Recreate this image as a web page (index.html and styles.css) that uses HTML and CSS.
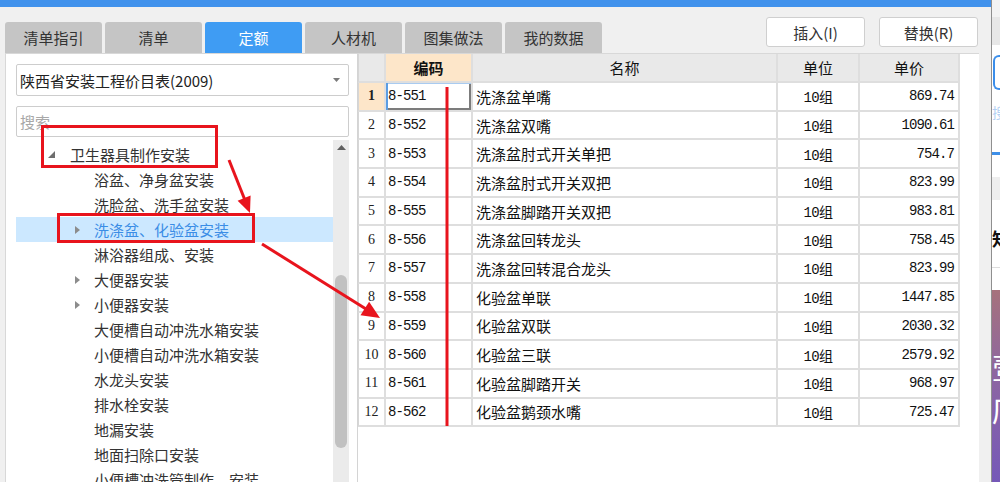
FILE: index.html
```html
<!DOCTYPE html>
<html lang="zh-CN">
<head>
<meta charset="utf-8">
<title>定额</title>
<link rel="stylesheet" href="styles.css">
</head>
<body>
<div class="screen">
  <div class="app">
    <div class="titlebar"></div>
    <div class="toolbar">
      <div class="tabs">
        <div class="tab">清单指引</div>
        <div class="tab">清单</div>
        <div class="tab active">定额</div>
        <div class="tab">人材机</div>
        <div class="tab">图集做法</div>
        <div class="tab">我的数据</div>
      </div>
      <div class="actions">
        <button class="btn">插入(I)</button>
        <button class="btn">替换(R)</button>
      </div>
    </div>
    <div class="workspace">
      <div class="left-panel">
        <div class="select">
          <span class="select-text">陕西省安装工程价目表(2009)</span>
          <svg class="caret" width="7" height="4" viewBox="0 0 7 4"><polygon points="0,0 7,0 3.5,4" fill="#7a7a7a"/></svg>
        </div>
        <div class="search">搜索</div>
        <div class="tree-wrap">
          <ul class="tree">
            <li class="node root"><svg class="tg-open" width="7" height="7" viewBox="0 0 7 7"><polygon points="7,0 7,7 0,7" fill="#6e6e6e"/></svg>卫生器具制作安装</li>
            <li class="node leaf">浴盆、净身盆安装</li>
            <li class="node leaf">洗脸盆、洗手盆安装</li>
            <li class="node branch selected"><svg class="tg" width="5" height="8" viewBox="0 0 5 8"><polygon points="0,0 5,4 0,8" fill="#8c8c8c"/></svg>洗涤盆、化验盆安装</li>
            <li class="node leaf">淋浴器组成、安装</li>
            <li class="node branch"><svg class="tg" width="5" height="8" viewBox="0 0 5 8"><polygon points="0,0 5,4 0,8" fill="#8c8c8c"/></svg>大便器安装</li>
            <li class="node branch"><svg class="tg" width="5" height="8" viewBox="0 0 5 8"><polygon points="0,0 5,4 0,8" fill="#8c8c8c"/></svg>小便器安装</li>
            <li class="node leaf">大便槽自动冲洗水箱安装</li>
            <li class="node leaf">小便槽自动冲洗水箱安装</li>
            <li class="node leaf">水龙头安装</li>
            <li class="node leaf">排水栓安装</li>
            <li class="node leaf">地漏安装</li>
            <li class="node leaf">地面扫除口安装</li>
            <li class="node leaf">小便槽冲洗管制作、安装</li>
          </ul>
          <div class="vscroll">
            <svg class="sc-up" width="9" height="5" viewBox="0 0 9 5"><polygon points="0,5 9,5 4.5,0" fill="#606060"/></svg>
            <div class="thumb"></div>
          </div>
        </div>
      </div>
      <div class="right-panel">
        <table class="grid">
          <thead>
            <tr>
              <th class="c-idx"></th>
              <th class="c-code hl">编码</th>
              <th class="c-name">名称</th>
              <th class="c-unit">单位</th>
              <th class="c-price">单价</th>
            </tr>
          </thead>
          <tbody>
            <tr class="cur"><td class="idx">1</td><td class="code focus">8-551</td><td class="name">洗涤盆单嘴</td><td class="unit">10组</td><td class="price">869.74</td></tr>
            <tr><td class="idx">2</td><td class="code">8-552</td><td class="name">洗涤盆双嘴</td><td class="unit">10组</td><td class="price">1090.61</td></tr>
            <tr><td class="idx">3</td><td class="code">8-553</td><td class="name">洗涤盆肘式开关单把</td><td class="unit">10组</td><td class="price">754.7</td></tr>
            <tr><td class="idx">4</td><td class="code">8-554</td><td class="name">洗涤盆肘式开关双把</td><td class="unit">10组</td><td class="price">823.99</td></tr>
            <tr><td class="idx">5</td><td class="code">8-555</td><td class="name">洗涤盆脚踏开关双把</td><td class="unit">10组</td><td class="price">983.81</td></tr>
            <tr><td class="idx">6</td><td class="code">8-556</td><td class="name">洗涤盆回转龙头</td><td class="unit">10组</td><td class="price">758.45</td></tr>
            <tr><td class="idx">7</td><td class="code">8-557</td><td class="name">洗涤盆回转混合龙头</td><td class="unit">10组</td><td class="price">823.99</td></tr>
            <tr><td class="idx">8</td><td class="code">8-558</td><td class="name">化验盆单联</td><td class="unit">10组</td><td class="price">1447.85</td></tr>
            <tr><td class="idx">9</td><td class="code">8-559</td><td class="name">化验盆双联</td><td class="unit">10组</td><td class="price">2030.32</td></tr>
            <tr><td class="idx">10</td><td class="code">8-560</td><td class="name">化验盆三联</td><td class="unit">10组</td><td class="price">2579.92</td></tr>
            <tr><td class="idx">11</td><td class="code">8-561</td><td class="name">化验盆脚踏开关</td><td class="unit">10组</td><td class="price">968.97</td></tr>
            <tr><td class="idx">12</td><td class="code">8-562</td><td class="name">化验盆鹅颈水嘴</td><td class="unit">10组</td><td class="price">725.47</td></tr>
          </tbody>
        </table>
      </div>
    </div>
  </div>
  <div class="divider"></div>
  <div class="side">
    <div class="s-top"></div>
    <div class="s-bar"></div>
    <div class="s-gap"></div>
    <div class="s-input"></div>
    <div class="s-blank"><span class="s-blue">搜</span></div>
    <div class="s-line"></div>
    <div class="s-white1"></div>
    <div class="s-gray"></div>
    <div class="s-white2"></div>
    <div class="s-title">知</div>
    <div class="s-white3"></div>
    <div class="s-rule"></div>
    <div class="s-white4"></div>
    <div class="s-banner"><span class="s-glyph">壹</span><span class="s-glyph">店</span></div>
  </div>
  <svg class="annot" width="1000" height="482" viewBox="0 0 1000 482">
    <g fill="none" stroke="#e8141d" stroke-width="3">
      <rect x="42.5" y="126.5" width="174" height="40"/>
      <rect x="58.5" y="214.5" width="195" height="27"/>
      <line x1="229" y1="160" x2="244.5" y2="199"/>
      <line x1="262" y1="244" x2="366" y2="309"/>
    </g>
    <polygon points="250,213 237.6,200.7 250.6,195.5" fill="#e8141d"/>
    <polygon points="380,318 360.5,315.2 369.1,301.7" fill="#e8141d"/>
    <rect x="445.5" y="87" width="3" height="339" fill="#e8141d"/>
  </svg>
</div>
</body>
</html>
```

FILE: styles.css
```css
* { box-sizing: border-box; }
html, body { margin: 0; padding: 0; }
body {
  width: 1000px;
  height: 482px;
  overflow: hidden;
  background: #f0f0f0;
  font-family: "Noto Sans CJK SC", "Noto Sans", sans-serif;
  color: #333;
}
.screen { position: relative; display: flex; width: 1000px; height: 482px; }
.app { width: 991px; display: flex; flex-direction: column; background: #f0f0f0; }
.titlebar { height: 7px; flex: none; background: #4192ec; }

.toolbar { height: 46px; flex: none; display: flex; align-items: flex-end; padding-left: 5px; }
.tabs { display: flex; gap: 3px; }
.tab {
  width: 97px; height: 31px; line-height: 31px;
  text-align: center; font-size: 15px; color: #333;
  background: #c5c5c5; border-radius: 3px 3px 0 0;
}
.tab.active { background: #3f9cf3; color: #fff; }
.actions { margin-left: auto; align-self: flex-start; margin-top: 10px; margin-right: 13px; display: flex; gap: 14px; }
.btn {
  width: 99px; height: 30px; padding: 0;
  background: #fff; border: 1px solid #cfcfcf; border-radius: 3px;
  font-family: "Noto Sans CJK SC", "Noto Sans", sans-serif; font-size: 15px; color: #333;
}

.workspace { flex: 1; min-height: 0; display: flex; padding-left: 5px; }
.left-panel {
  width: 352px; background: #fff;
  border-left: 1px solid #d8d8d8; border-top: 1px solid #d8d8d8;
  padding: 10px 0 0 10px;
  display: flex; flex-direction: column;
}
.select {
  width: 333px; height: 32px; flex: none;
  border: 1px solid #cdcdcd; border-radius: 2px;
  display: flex; align-items: center; padding: 0 0 0 3px;
  font-size: 15px; color: #222;
}
.select-text { flex: 1; }
.caret { margin-right: 8px; }
.search {
  width: 333px; height: 31px; flex: none; margin-top: 10px;
  border: 1px solid #cdcdcd; border-radius: 2px;
  padding-left: 3px; line-height: 29px; font-size: 15px; color: #a8a8a8;
}
.tree-wrap { flex: 1; min-height: 0; margin-top: 3px; display: flex; }
.tree { list-style: none; margin: 0; padding: 2px 0 0; width: 317px; }
.node { height: 25px; line-height: 25px; font-size: 15px; color: #333; white-space: nowrap; display: flex; align-items: center; }
.node.root { padding-left: 32px; }
.node.root .tg-open { margin-right: 15px; }
.node.leaf { padding-left: 78px; }
.node.branch { padding-left: 59px; }
.node.branch .tg { margin-right: 14px; }
.node.selected { background: #cce8ff; color: #3b8de6; }
.vscroll { width: 16px; background: #ebebeb; display: flex; flex-direction: column; align-items: center; }
.sc-up { margin-top: 5px; flex: none; }
.thumb { width: 12px; height: 173px; margin-top: 125px; border-radius: 6px; background: #c1c1c1; }

.right-panel {
  width: 622px; background: #fff;
  border-left: 1px solid #d4d4d4; border-top: 1px solid #d8d8d8;
}
.grid {
  table-layout: fixed; width: 602px;
  border-collapse: separate; border-spacing: 0;
  font-size: 15px; color: #111;
}
.grid th, .grid td {
  padding: 0; border-right: 2px solid #dedede; border-bottom: 2px solid #dedede;
  white-space: nowrap; overflow: hidden;
}
.grid th:first-child, .grid td:first-child { border-left: 1px solid #d6d6d6; }
.grid th { height: 29px; background: #e9e9e9; font-weight: 400; text-align: center; }
.grid th.hl { background: #fde6c9; font-weight: 700; }
.c-idx { width: 28px; }
.c-code { width: 87px; }
.c-name { width: 305px; }
.c-unit { width: 82px; }
.c-price { width: 100px; }
.grid td { height: 28.7px; }
.idx { text-align: center; font-family: "Liberation Serif", serif; font-size: 14px; color: #222; }
.cur .idx { background: #fde6c9; font-weight: 700; }
.code { padding-left: 2px !important; font-family: "Liberation Mono", monospace; font-size: 14px; letter-spacing: -0.9px; }
.code.focus { box-shadow: inset 2px 0 0 #5b9de3, inset 0 1px 0 #a9cbf0, inset -2px -2px 0 #7c7c7c; }
.name { padding-left: 3px !important; }
.unit { text-align: center; font-family: "Liberation Mono", "Noto Sans CJK SC", monospace; font-size: 14px; letter-spacing: -0.6px; }
.price { text-align: right; padding-right: 4px !important; font-family: "Liberation Mono", monospace; font-size: 14px; letter-spacing: -0.9px; }

.divider { width: 1px; background: #8f8f8f; }
.side { width: 8px; display: flex; flex-direction: column; background: #fff; overflow: hidden; }
.s-top { height: 17px; background: #f3f3f3; }
.s-bar { height: 28px; background: #e7e7e7; }
.s-gap { height: 10px; }
.s-input { height: 35px; margin-left: 1px; border: 2px solid #3b8eea; border-right: none; border-radius: 6px 0 0 6px; }
.s-blank { height: 62px; padding-top: 14px; }
.s-blue { display: block; font-size: 14px; line-height: 16px; color: #b3d0f3; white-space: nowrap; }
.s-line { height: 3px; background: #3d8fe8; }
.s-white1 { height: 22px; }
.s-gray { height: 23px; background: #eeeeee; }
.s-white2 { height: 30px; }
.s-title { height: 17px; font-size: 18px; line-height: 17px; font-weight: 700; color: #111; white-space: nowrap; }
.s-white3 { height: 20px; }
.s-rule { height: 1px; background: #dddddd; }
.s-white4 { height: 22px; }
.s-banner {
  flex: 1; padding-top: 58px; display: flex; flex-direction: column; gap: 6px;
  background: linear-gradient(180deg, #a6727c 0%, #8d66a2 45%, #7558b8 100%);
}
.s-glyph { font-size: 30px; line-height: 36px; color: #fff; white-space: nowrap; }

.annot { position: absolute; left: 0; top: 0; pointer-events: none; }
```
